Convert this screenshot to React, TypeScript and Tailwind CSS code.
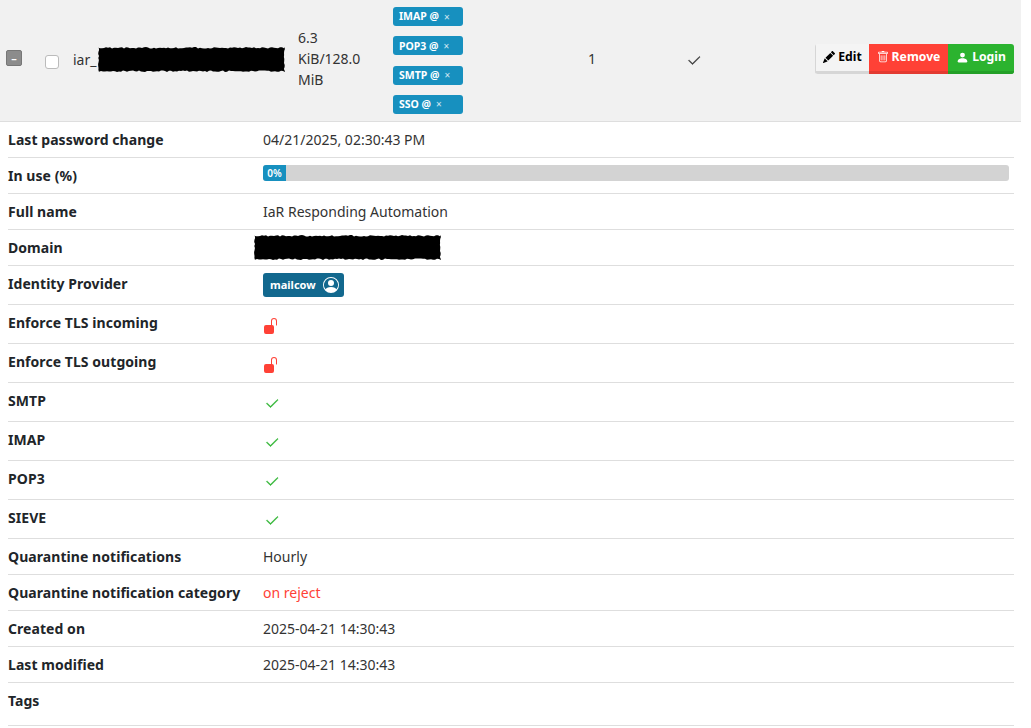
import React from "react";
import { BsPencilFill, BsTrash, BsPersonFill, BsCheck2, BsUnlockFill, BsPersonCircle } from "react-icons/bs";

function Redact({ w, h, className }: { w: number; h: number; className?: string }) {
  let seed = w * 7 + h;
  const r = () => {
    seed = (seed * 9301 + 49297) % 233280;
    return seed / 233280;
  };
  const pts: string[] = [];
  for (let x = 0; x <= w; x += 2) pts.push(`${x},${(r() * 1.6).toFixed(1)}`);
  for (let y = 0; y <= h; y += 2) pts.push(`${(w - r() * 1.2).toFixed(1)},${y}`);
  for (let x = w; x >= 0; x -= 2) pts.push(`${x},${(h - r() * 1.6).toFixed(1)}`);
  for (let y = h; y >= 0; y -= 2) pts.push(`${(r() * 1.2).toFixed(1)},${y}`);
  return (
    <svg width={w} height={h} viewBox={`0 0 ${w} ${h}`} className={className}>
      <polygon points={pts.join(" ")} fill="#000" />
    </svg>
  );
}

function Tag({ children }: { children: string }) {
  return (
    <div className="flex h-[19px] w-[70px] items-center rounded-[3px] bg-[#1790bf] pl-[6px] text-[10.5px] font-bold leading-none text-white">
      <span>{children}</span>
      <span className="ml-[5px] text-[10px] font-normal text-white/80">×</span>
    </div>
  );
}

function Row({ label, h = "h-9", children }: { label: string; h?: string; children?: React.ReactNode }) {
  return (
    <div className={`flex ${h} items-center border-b border-[#dedede]`}>
      <div className="w-[255px] self-start pt-[8px] text-[14px] font-bold leading-5 tracking-[0.06px] text-[#212529]">{label}</div>
      <div className="flex flex-1 items-center text-[14px] text-[#333]">{children}</div>
    </div>
  );
}

const Check = () => <BsCheck2 className="mt-[3px] ml-[1px] text-[#2bb32f]" size={16} strokeWidth={0.5} />;
const Lock = () => <BsUnlockFill className="mt-[3px]" color="#ff4136" size={16} />;

export default function App() {
  return (
    <div className="min-h-[728px] w-[1031px] bg-white font-['Noto_Sans',sans-serif] text-[14px] text-[#333]">
      <div className="flex h-[122px] w-[1021px] items-center border-b border-[#dedede] bg-[#f1f1f1] pl-[6px]">
        <div className="mb-[5px] flex h-4 w-4 items-center justify-center rounded-[2px] border border-[#777] bg-[#8c8c8c] text-[11px] font-bold leading-none text-white">–</div>
        <div className="ml-[23px] mt-[3px] h-[14px] w-[14px] rounded-[3px] border border-[#bbb] bg-white" />
        <div className="mb-[2px] ml-[14px] flex w-[225px] items-center">
          <span>iar_</span>
          <Redact w={187} h={25} className="ml-[2px]" />
        </div>
        <div className="mb-[4px] w-[95px] leading-[21px]">
          6.3
          <br />
          KiB/128.0
          <br />
          MiB
        </div>
        <div className="flex w-[70px] flex-col gap-[10.33px]">
          <Tag>IMAP @</Tag>
          <Tag>POP3 @</Tag>
          <Tag>SMTP @</Tag>
          <Tag>SSO @</Tag>
        </div>
        <div className="mb-[4px] ml-[125px] w-[99px]">1</div>
        <BsCheck2 size={16} strokeWidth={0.4} className="-ml-[1px] text-[#333]" />
        <div className="mb-[4px] ml-[113px] flex h-[30px] overflow-hidden rounded-[3px] text-[12.2px] font-bold leading-none">
          <div className="flex w-[54px] items-center justify-center gap-[3px] border-b-[3px] border-l border-[#d6d6d6] bg-[#f4f4f4] text-black">
            <BsPencilFill size={12} />
            Edit
          </div>
          <div className="flex w-[79px] items-center justify-center gap-[3px] border-b-[3px] border-[#e33b32] bg-[#ff4136] text-white">
            <BsTrash size={12} />
            Remove
          </div>
          <div className="flex w-[66px] items-center justify-center gap-[3px] border-b-[3px] border-[#24a028] bg-[#2bb32f] text-white">
            <BsPersonFill size={13} />
            Login
          </div>
        </div>
      </div>
      <div className="ml-2 w-[1006px]">
        <Row label="Last password change">04/21/2025, 02:30:43 PM</Row>
        <Row label="In use (%)">
          <div className="mr-[5px] mb-[6px] flex h-4 flex-1 overflow-hidden rounded-[3px] bg-[#d3d3d3]">
            <div className="w-[23px] bg-[#1790bf] text-center text-[10px] font-semibold leading-4 text-white">0%</div>
          </div>
        </Row>
        <Row label="Full name">IaR Responding Automation</Row>
        <Row label="Domain">
          <Redact w={187} h={25} className="-ml-[9px]" />
        </Row>
        <Row label="Identity Provider" h="h-[39px]">
          <div className="flex h-6 w-[81px] items-center gap-[7px] rounded-[3px] bg-[#12688e] pl-[7px] text-[11px] font-bold text-white">
            mailcow
            <BsPersonCircle size={16} />
          </div>
        </Row>
        <Row label="Enforce TLS incoming" h="h-[39px]"><Lock /></Row>
        <Row label="Enforce TLS outgoing" h="h-[39px]"><Lock /></Row>
        <Row label="SMTP" h="h-[39px]"><Check /></Row>
        <Row label="IMAP" h="h-[39px]"><Check /></Row>
        <Row label="POP3" h="h-[39px]"><Check /></Row>
        <Row label="SIEVE" h="h-[39px]"><Check /></Row>
        <Row label="Quarantine notifications">Hourly</Row>
        <Row label="Quarantine notification category"><span className="text-[#ff4136]">on reject</span></Row>
        <Row label="Created on">2025-04-21 14:30:43</Row>
        <Row label="Last modified">2025-04-21 14:30:43</Row>
        <Row label="Tags" h="h-[43px]" />
      </div>
    </div>
  );
}
